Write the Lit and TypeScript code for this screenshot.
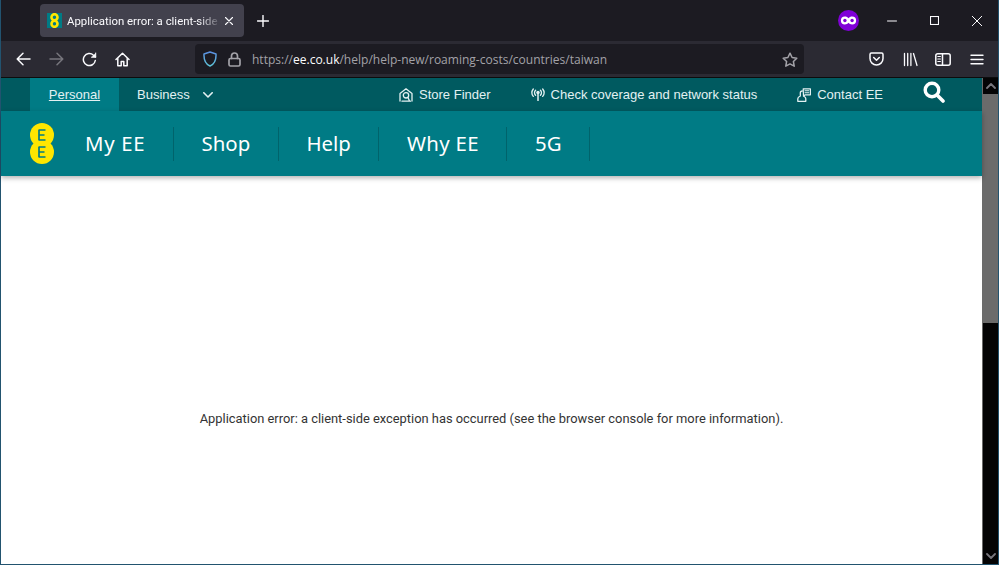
import { LitElement, html, css, svg } from "lit";
import { customElement } from "lit/decorators.js";

const ic = (w: number, h: number, vb: string, body: unknown, cls = "") =>
  html`<svg class=${cls} width=${w} height=${h} viewBox=${vb} fill="none" stroke="currentColor" stroke-width="1.5" stroke-linecap="round" stroke-linejoin="round">${body}</svg>`;

@customElement("app-root")
export class AppRoot extends LitElement {
  static styles = css`
    :host { display: block; width: 999px; height: 565px; overflow: hidden; background: #22536f; font-family: "Liberation Sans", Arial, sans-serif; }
    svg { display: block; flex: none; }
    .win { margin: 0 1px 1px 1px; height: 564px; display: flex; flex-direction: column; background: #fff; }
    .tabs { height: 41px; flex: none; background: #1c1b22; display: flex; align-items: flex-start; padding: 4px 0 0 39px; color: #fbfbfe; box-sizing: border-box; }
    .tab { width: 204px; height: 33px; box-sizing: border-box; background: #42414d; border-radius: 4px; display: flex; align-items: center; padding: 0 7px; gap: 5px; font: 11.4px Roboto, "Open Sans", sans-serif; overflow: hidden; }
    .tabtext { width: 155px; margin-right: -3px; white-space: nowrap; overflow: hidden; -webkit-mask-image: linear-gradient(to right, #000 85%, transparent); mask-image: linear-gradient(to right, #000 85%, transparent); }
    .fav { width: 15px; height: 15px; background: #007b85; display: flex; align-items: center; justify-content: center; flex: none; }
    .plus { margin: 11px 0 0 13px; }
    .spacer { flex: 1; }
    .winctl { display: flex; align-items: center; height: 41px; margin-top: -4px; color: #fbfbfe; }
    .mask { margin-right: 28px; }
    .min { margin-right: 33px; } .max { margin-right: 33px; } .close { margin-right: 16px; }
    .toolbar { height: 36px; flex: none; background: #2b2a33; display: flex; align-items: center; color: #fbfbfe; }
    .nav1 { margin-left: 15px; } .nav2 { margin-left: 18px; color: #77767d; } .nav3 { margin-left: 18px; } .nav4 { margin-left: 18px; }
    .url { margin-left: 65px; width: 609px; height: 30px; border-radius: 4px; background: #1c1b22; display: flex; align-items: center; box-sizing: border-box; padding: 0 6px 0 8px; font: 12.03px "Open Sans", "Noto Sans", sans-serif; color: #a3a2a8; }
    .url b { font-weight: 400; color: #fbfbfe; }
    .shield { margin-right: 11px; color: #6aa6dc; } .lock { margin-right: 11px; }
    .addr { flex: 1; white-space: nowrap; }
    .tools { display: flex; align-items: center; margin-left: 65px; }
    .t2 { margin-left: 19px; } .t3 { margin-left: 17px; } .t4 { margin-left: 19px; }
    .divider { height: 1px; flex: none; background: #0c0c0d; }
    .page { flex: 1; display: flex; min-height: 0; }
    .content { flex: 1; min-width: 0; display: flex; flex-direction: column; }
    .top { height: 33px; flex: none; background: #005a60; color: #e3f1f2; display: flex; align-items: center; font-size: 13px; padding-left: 29px; box-sizing: border-box; }
    .personal { width: 89px; height: 33px; background: #007b85; display: flex; align-items: center; justify-content: center; text-decoration: underline; box-sizing: border-box; }
    .biz { margin-left: 18px; display: flex; align-items: center; gap: 13px; }
    .links { margin-left: auto; display: flex; align-items: center; color: #e3f1f2; padding-right: 37px; }
    .lk { display: flex; align-items: center; gap: 6px; margin-right: 40px; }
    .mag { color: #fff; margin-top: -5px; }
    .main { height: 65px; flex: none; background: #007b85; display: flex; align-items: center; padding-left: 29px; box-shadow: 0 2px 5px rgba(0,0,0,.3); position: relative; z-index: 1; }
    .logo { margin-right: 3.4px; }
    .item { height: 34px; box-sizing: border-box; display: flex; align-items: center; padding: 0 27.6px 2px; border-right: 1px solid #00636b; color: #fff; font: 20.4px "Noto Sans", "Open Sans", sans-serif; }
    .wide1 { letter-spacing: .7px; }
    .wide2 { letter-spacing: .3px; }
    .body { flex: 1; display: flex; align-items: center; justify-content: center; background: #fff; padding-top: 96px; box-sizing: border-box; }
    .msg { font: 12.88px Roboto, sans-serif; color: #333; }
    .sb { flex: none; background: #040405; display: flex; flex-direction: column; border-left: 1px solid #6a6a6a; box-sizing: border-box; width: 16px; color: #77767d; }
    .sbup { height: 16px; display: flex; align-items: center; justify-content: center; }
    .thumb { height: 229px; background: #6b6b6b; margin-left: -1px; }
    .sbfill { flex: 1; }
    .sbdown { height: 16px; display: flex; align-items: center; justify-content: center; }
  `;

  render() {
    return html`<div class="win">
      <div class="tabs">
        <div class="tab">
          <div class="fav">
            ${ic(9, 15, "0 0 9 15", svg`<circle cx="4.5" cy="4.2" r="3" stroke="#ffe600" stroke-width="2.6"/><circle cx="4.5" cy="10.8" r="3" stroke="#ffe600" stroke-width="2.6"/>`)}
          </div>
          <div class="tabtext">Application error: a client-side exception has occurred</div>
          ${ic(10, 10, "0 0 10 10", svg`<path d="M1.5 1.5l7 7M8.5 1.5l-7 7" stroke-width="1.1"/>`)}
        </div>
        ${ic(12, 12, "0 0 12 12", svg`<path d="M6 .5v11M.5 6h11" stroke-width="1.4"/>`, "plus")}
        <div class="spacer"></div>
        <div class="winctl">
          <svg class="mask" width="21" height="21" viewBox="0 0 21 21"><circle cx="10.5" cy="10.5" r="10.5" fill="#8000d7"/><path d="M6.900 14.500a4 4 0 1 1 0-8c1.500 0 2.700.7 3.600 1.700.9-1 2.100-1.700 3.600-1.700a4 4 0 1 1 0 8c-1.500 0-2.700-.7-3.600-1.700-.9 1-2.100 1.700-3.600 1.700z" fill="#fff"/><circle cx="6.900" cy="10.500" r="1.700" fill="#8000d7"/><circle cx="14.100" cy="10.500" r="1.700" fill="#8000d7"/></svg>
          ${ic(10, 2, "0 0 10 2", svg`<path d="M0.500 1h9" stroke-width="1"/>`, "min")}
          ${ic(9, 9, "0 0 9 9", svg`<rect x=".5" y=".5" width="8" height="8" stroke-width="1.100" stroke-linecap="butt" stroke-linejoin="miter"/>`, "max")}
          ${ic(10, 10, "0 0 10 10", svg`<path d="M.3.3l9.400 9.400M9.700.3L.3 9.700" stroke-width="1"/>`, "close")}
        </div>
      </div>
      <div class="toolbar">
        ${ic(15, 14, "0 0 15 14", svg`<path d="M14 7H1.500M7 1.200L1.200 7 7 12.800"/>`, "nav1")}
        ${ic(15, 14, "0 0 15 14", svg`<path d="M1 7h12.500M8 1.200L13.800 7 8 12.800"/>`, "nav2")}
        ${ic(15, 15, "0 0 15 15", svg`<path d="M13.300 8.500A6 6 0 1 1 11.500 3.200L13.500 5"/><path d="M13.700 1v4.200H9.500" fill="currentColor" stroke-width="1"/>`, "nav3")}
        ${ic(15, 15, "0 0 15 15", svg`<path d="M1 7.500L7.500 1.200 14 7.500M2.800 6v7.800h3.400V9.500h2.600v4.300h3.400V6"/>`, "nav4")}
        <div class="url">
          ${ic(14, 16, "0 0 14 16", svg`<defs><linearGradient id="sh" x1="0" y1="0" x2="0" y2="1"><stop offset="0" stop-color="#5a8fe0"/><stop offset="1" stop-color="#5fc4d8"/></linearGradient></defs><path d="M7 1l6 2c.300 6-1.500 10-6 12C2.500 13 .7 9 1 3z" stroke="url(#sh)"/>`, "shield")}
          ${ic(13, 15, "0 0 13 15", svg`<rect x="1" y="6.500" width="11" height="7.500" rx="1.500" stroke-width="1.700"/><path d="M3.500 6.500V4a3 3 0 0 1 6 0v2.500" stroke-width="1.700"/>`, "lock")}
          <div class="addr">https://<b>ee.co.uk</b>/help/help-new/roaming-costs/countries/taiwan</div>
          ${ic(16, 15, "0 0 16 15", svg`<path d="M8 1.200l2.100 4.300 4.700.7-3.400 3.300.8 4.700L8 11.900l-4.200 2.300.8-4.700L1.200 6.200l4.700-.7z"/>`)}
        </div>
        <div class="tools">
          ${ic(15, 14, "0 0 15 14", svg`<path d="M1 2.500c0-.8.600-1.500 1.400-1.500h10.200c.8 0 1.400.7 1.400 1.500V6.500c0 3.700-3 6.500-6.500 6.500S1 10.200 1 6.500z"/><path d="M4.700 5.500l2.800 2.700 2.800-2.700"/>`)}
          ${ic(15, 15, "0 0 15 15", svg`<path d="M1.500 1.500v12M4.700 1.500v12M7.900 1.500v12M10.500 1.500l3.500 12" stroke-width="1.300"/>`, "t2")}
          ${ic(16, 13, "0 0 16 13", svg`<rect x=".8" y=".8" width="14.400" height="11.400" rx="2"/><path d="M7.500.8v11.400"/><path d="M2.800 3.500h2.600M2.800 6h2.600M2.800 8.500h2.600" stroke-width="1.100"/>`, "t3")}
          ${ic(14, 11, "0 0 14 11", svg`<path d="M1 1.200h12M1 5.500h12M1 9.800h12" stroke-width="1.400"/>`, "t4")}
        </div>
      </div>
      <div class="divider"></div>
      <div class="page">
        <div class="content">
          <div class="top">
            <div class="personal">Personal</div>
            <div class="biz">Business ${ic(10, 6, "0 0 10 6", svg`<path d="M.8.8L5 5l4.200-4.200" stroke-width="1.600"/>`)}</div>
            <div class="links">
              <div class="lk">${ic(14, 14, "0 0 14 14", svg`<path d="M1 13V5.500L7 .8l6 4.700V13" stroke-width="1.300"/><circle cx="7" cy="7.300" r="2.700" stroke-width="1.300"/><path d="M3 13.200h8.500M9 9.500l1.500 3.500" stroke-width="1.300"/>`)}Store Finder</div>
              <div class="lk">${ic(14, 13, "0 0 14 13", svg`<circle cx="7" cy="4.500" r="1.700" fill="currentColor" stroke="none"/><path d="M7 5v7.500" stroke-width="1.500"/><path d="M4.600 2.200a3.400 3.400 0 0 0 0 5M9.400 2.200a3.400 3.400 0 0 1 0 5M2.300 1a6 6 0 0 0 0 7.400M11.700 1a6 6 0 0 1 0 7.400" stroke-width="1.300"/>`)}Check coverage and network status</div>
              <div class="lk">${ic(14, 14, "0 0 14 14", svg`<path d="M.8 13.300v-2.500c0-1.500 1.400-2.300 2.500-2.800M7.200 8.500c1 .5 1.600 1.200 1.600 2.300v2.500H.8M3.300 8V5c0-1 1-2 2-2" stroke-width="1.300"/><path d="M6.200 .8h7.200v6H8.200L6.500 8.200z" fill="#005a60" stroke-width="1.200"/><path d="M8 2.800h3.800M8 4.800h3.800" stroke-width="1.100"/>`)}Contact EE</div>
              ${ic(22, 22, "0 0 22 22", svg`<circle cx="9" cy="9" r="6.800" stroke-width="3.400"/><path d="M14 14l6 6" stroke-width="3.600"/>`, "mag")}
            </div>
          </div>
          <div class="main">
            <svg class="logo" width="24" height="41" viewBox="0 0 24 41"><circle cx="12" cy="12" r="12" fill="#ffe600"/><circle cx="12" cy="29" r="12" fill="#ffe600"/><path d="M8.500 7h7M8.500 12h6M8.500 17h7M9 7v10M8.500 24h7M8.500 29h6M8.500 34h7M9 24v10" stroke="#007b85" stroke-width="1.700" fill="none"/></svg>
            <div class="item wide1">My EE</div>
            <div class="item">Shop</div>
            <div class="item">Help</div>
            <div class="item wide2">Why EE</div>
            <div class="item">5G</div>
          </div>
          <div class="body"><div class="msg">Application error: a client-side exception has occurred (see the browser console for more information).</div></div>
        </div>
        <div class="sb">
          <div class="sbup">${ic(10, 6, "0 0 10 6", svg`<path d="M1 5l4-4 4 4" stroke-width="1.800"/>`)}</div>
          <div class="thumb"></div>
          <div class="sbfill"></div>
          <div class="sbdown">${ic(10, 6, "0 0 10 6", svg`<path d="M1 1l4 4 4-4" stroke-width="1.800"/>`)}</div>
        </div>
      </div>
    </div>`;
  }
}
